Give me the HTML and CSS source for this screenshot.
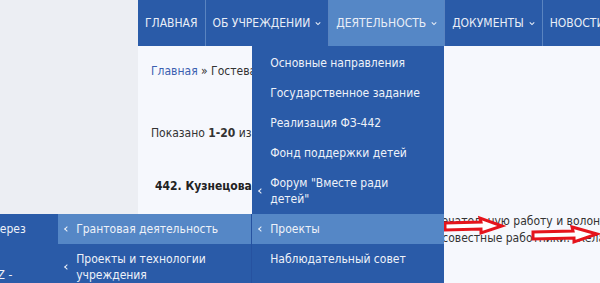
FILE: index.html
```html
<!DOCTYPE html>
<html lang="ru">
<head>
    <meta charset="UTF-8">
    <meta name="viewport" content="width=device-width, initial-scale=1.0">
    <title>Гостевая книга</title>
    <link rel="stylesheet" href="styles.css">
</head>
<body>
    <div class="page">
        <header class="top">
            <div class="top-side"></div>
            <nav class="nav">
                <ul class="menu">
                    <li class="menu-item"><a href="#">ГЛАВНАЯ</a></li>
                    <li class="menu-item"><a href="#">ОБ УЧРЕЖДЕНИИ <svg class="caret" viewBox="0 0 8 5"><polyline points="1,1 4,4 7,1"/></svg></a></li>
                    <li class="menu-item active"><a href="#">ДЕЯТЕЛЬНОСТЬ <svg class="caret" viewBox="0 0 8 5"><polyline points="1,1 4,4 7,1"/></svg></a>
                        <ul class="dropdown">
                            <li><a href="#">Основные направления</a></li>
                            <li><a href="#">Государственное задание</a></li>
                            <li><a href="#">Реализация ФЗ-442</a></li>
                            <li><a href="#">Фонд поддержки детей</a></li>
                            <li class="sub"><a href="#">Форум "Вместе ради детей"</a></li>
                            <li class="sub open"><a href="#">Проекты</a>
                                <ul class="dropdown level2">
                                    <li class="sub open"><a href="#">Грантовая деятельность</a>
                                        <ul class="dropdown level3">
                                            <li><a href="#">Адаптация детей через</a></li>
                                            <li><a href="#">Проект «Шаги»<br>по программе для Z -<br>будущее вместе с нами</a></li>
                                        </ul>
                                    </li>
                                    <li class="sub"><a href="#">Проекты и технологии учреждения</a></li>
                                </ul>
                            </li>
                            <li><a href="#">Наблюдательный совет</a></li>
                            <li><a href="#">Попечительский совет</a></li>
                        </ul>
                    </li>
                    <li class="menu-item"><a href="#">ДОКУМЕНТЫ <svg class="caret" viewBox="0 0 8 5"><polyline points="1,1 4,4 7,1"/></svg></a></li>
                    <li class="menu-item"><a href="#">НОВОСТИ</a></li>
                </ul>
            </nav>
        </header>

        <div class="body">
            <aside class="side"></aside>
            <main class="content">
                <p class="crumbs"><a href="#">Главная</a> » Гостевая книга</p>
                <p class="count">Показано <b>1-20</b> из <b>442</b></p>
                <div class="entry">
                    <h3 class="entry-title">442. Кузнецова Ирина</h3>
                    <p class="entry-text">
                        <span class="line">Огромное спасибо всем сотрудникам за вашу замечательную работу и волонтерство!</span>
                        <span class="line">Здесь служат настоящие профессионалы и добросовестные работники. Желаем</span>
                    </p>
                    <svg class="arrows" viewBox="0 0 160 32">
                        <path d="M2 9 L38 8 L37 4 L59 12 L38 19 L38 15 L2 16 Z"/>
                        <path d="M90 18 L130 17 L129 13 L154 20 L131 28 L131 24 L90 25 Z"/>
                    </svg>
                </div>
            </main>
        </div>
    </div>
</body>
</html>
```

FILE: styles.css
```css
* {
    margin: 0;
    padding: 0;
    box-sizing: border-box;
}

html, body {
    height: 100%;
    overflow: hidden;
}

body {
    font-family: Tahoma, 'DejaVu Sans Condensed', sans-serif;
    font-size: 12px;
    background: #ECEEF3;
    color: #333;
}

a {
    text-decoration: none;
    color: inherit;
}

ul {
    list-style: none;
}

.top {
    display: flex;
    height: 46px;
}

.top-side {
    flex: 0 0 138px;
}

.nav {
    flex: 1;
    background: #2A5BA8;
}

.menu {
    display: flex;
    height: 100%;
    white-space: nowrap;
}

.menu-item {
    position: relative;
    border-left: 1px solid #5A84C0;
}

.menu-item:first-child {
    border-left: none;
}

.menu-item > a {
    display: flex;
    align-items: center;
    gap: 5px;
    height: 46px;
    padding: 0 7px;
    font-size: 12px;
    color: #E9EEF7;
}

.menu-item.active > a {
    background: #5587C6;
}

.caret {
    width: 6px;
    height: 5px;
    fill: none;
    stroke: #E9EEF7;
    stroke-width: 1.4;
}

.dropdown {
    position: absolute;
    top: 100%;
    right: 0;
    width: 192px;
    padding-top: 2px;
    background: #2A5BA8;
    white-space: normal;
    z-index: 5;
}

.dropdown li {
    position: relative;
}

.dropdown a {
    display: block;
    padding: 7px 14px 7px 18px;
    line-height: 16px;
    color: #EEF2F9;
}

.dropdown .sub > a::before {
    content: '';
    position: absolute;
    left: 7px;
    top: 50%;
    width: 3px;
    height: 3px;
    margin-top: -2px;
    border-left: 1.3px solid #EEF2F9;
    border-bottom: 1.3px solid #EEF2F9;
    transform: rotate(45deg);
}

.dropdown .open > a {
    background: #5587C6;
}

.dropdown.level2 {
    top: 0;
    right: 100%;
    width: 194px;
    padding-top: 0;
    border-right: 1px solid #2652A0;
}

.dropdown.level3 {
    top: 0;
    right: 100%;
    width: 186px;
    padding-top: 0;
    white-space: nowrap;
}

.body {
    display: flex;
    height: 237px;
}

.side {
    flex: 0 0 138px;
}

.content {
    flex: 1;
    background: #F6F8FD;
    padding: 17px 13px;
}

.crumbs {
    line-height: 17px;
}

.crumbs a {
    color: #3A5FB0;
}

.count {
    margin-top: 45px;
    line-height: 17px;
}

.entry {
    position: relative;
    margin-top: 36px;
    padding-left: 4px;
}

.entry-title {
    font-size: 12px;
    font-weight: bold;
    line-height: 17px;
    color: #222;
}

.entry-text {
    margin-top: 18px;
    line-height: 17px;
    white-space: nowrap;
}

.entry-text .line {
    display: block;
}

.arrows {
    position: absolute;
    left: 292px;
    top: 36px;
    width: 160px;
    height: 32px;
    fill: #FFFFFF;
    stroke: #E5141C;
    stroke-width: 3;
}
```
